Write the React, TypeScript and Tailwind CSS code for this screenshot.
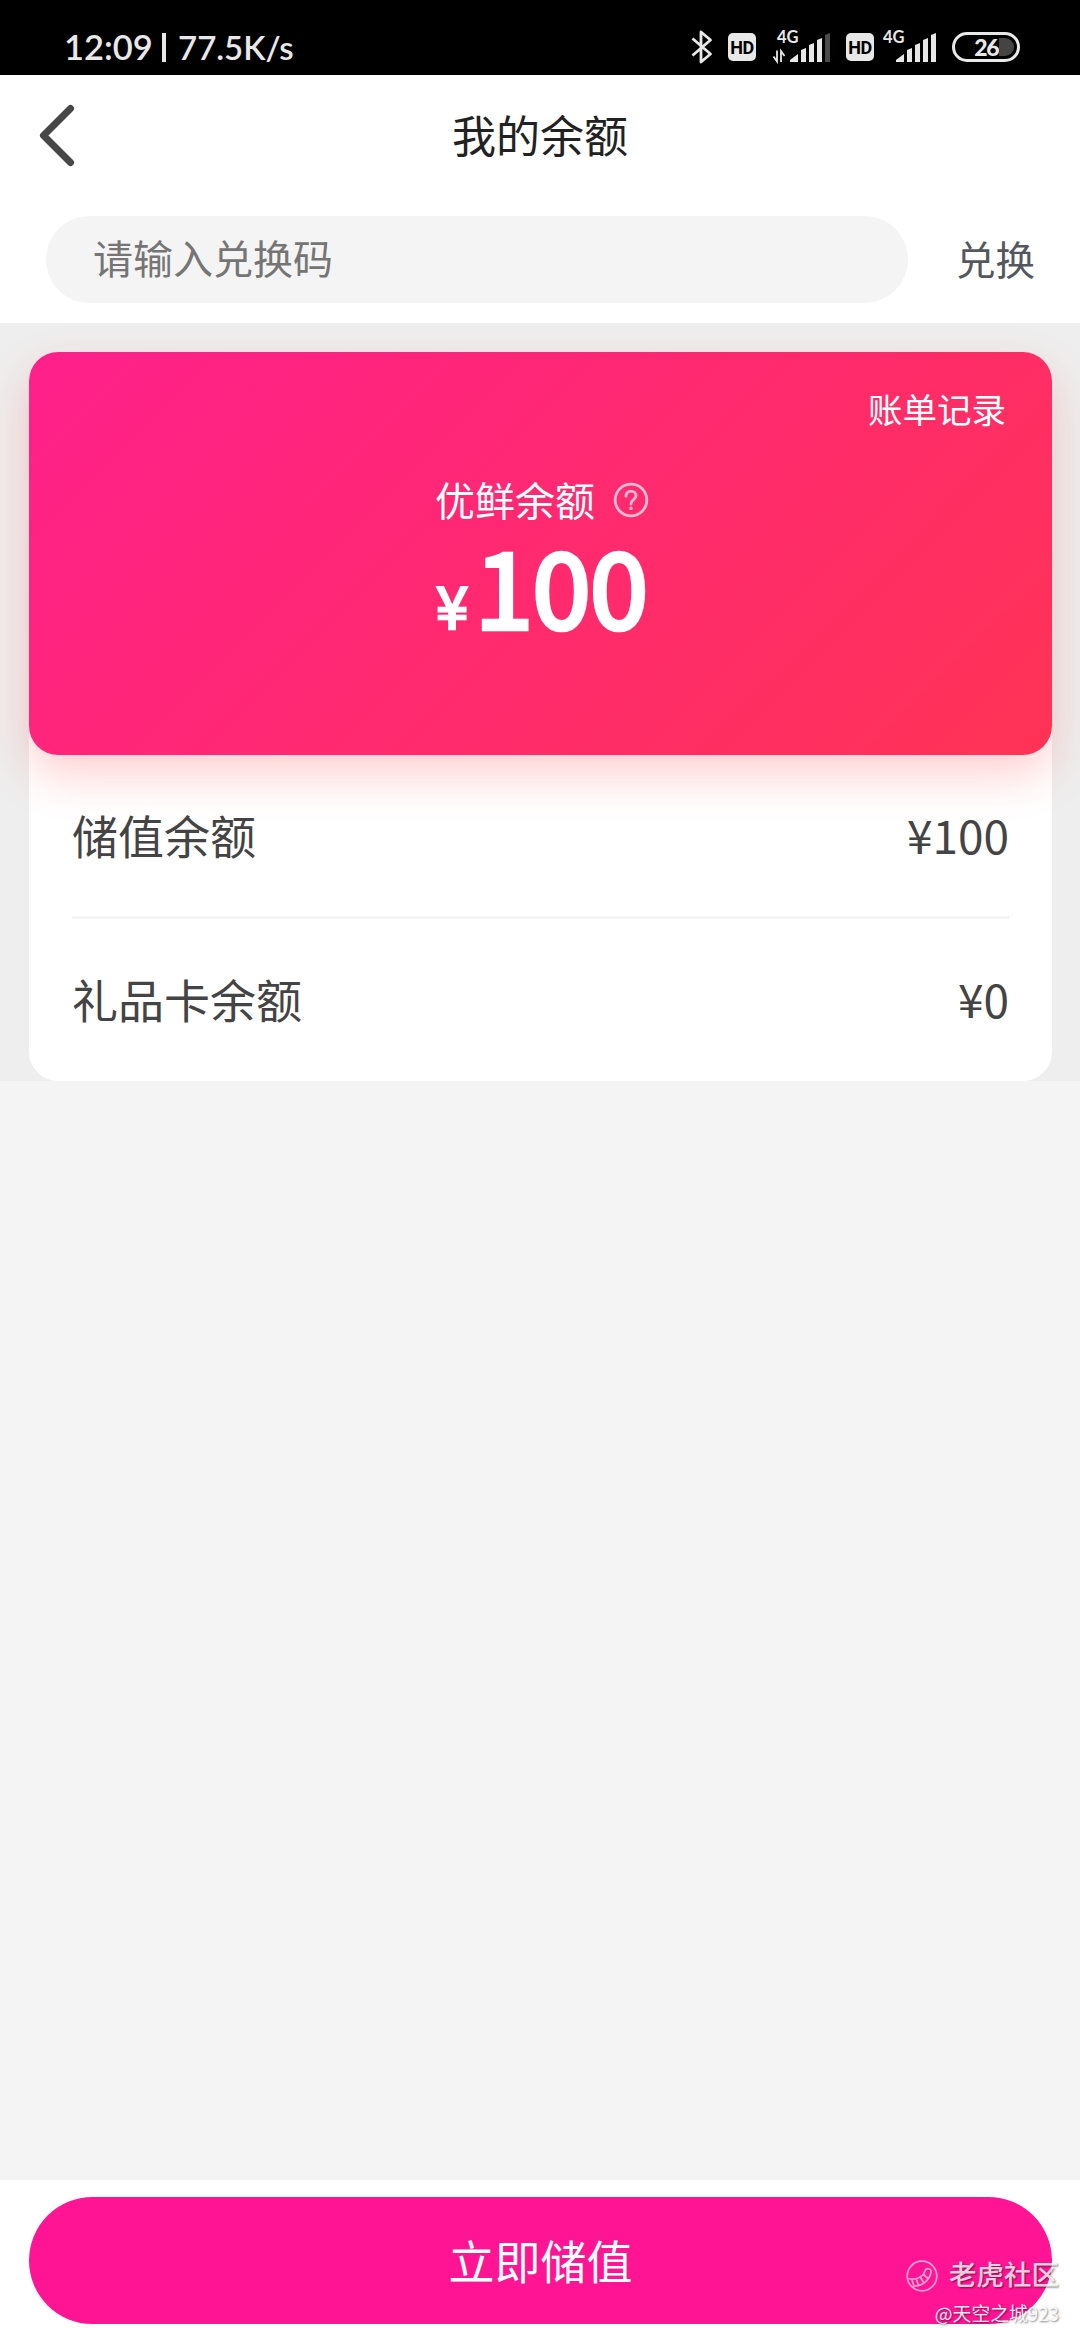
import type { ReactNode } from 'react';

interface SignalProps {
  level: number;
  transferring?: boolean;
}

interface BalanceRowProps {
  label: string;
  amount: number;
}

const BARS = [
  'M18 32V30L26 24V32Z',
  'M29 32V20L34 18V32Z',
  'M37 32V15L42 13V32Z',
  'M45 32V10L50 8V32Z',
  'M53 32V5L58 3V32Z',
];

function BluetoothIcon() {
  return (
    <svg width="22" height="36" viewBox="0 0 22 36" fill="none" stroke="#e8e8e8" strokeWidth="2.8" strokeLinejoin="round">
      <path d="M1.5 9.5L19.5 25L10 33V3L19.5 11L1.5 26.5" />
    </svg>
  );
}

function HdBadge() {
  return (
    <span className="flex h-7 w-7 items-center justify-center rounded-[5px] bg-[#e8e8e8] pt-px font-['Roboto'] text-[18px] leading-none font-bold tracking-[-0.5px] text-black">
      HD
    </span>
  );
}

function Signal({ level, transferring }: SignalProps) {
  return (
    <svg width="58" height="43" viewBox="0 -4 58 43" fill="#e8e8e8">
      <text x="5" y="13" fontFamily="Lato" fontSize="16.5" fontWeight="700">
        4G
      </text>
      {transferring && (
        <path d="M1.5 26.5L5 31.5V20.5M12.5 26L9 21V32" fill="none" stroke="#e8e8e8" strokeWidth="1.8" />
      )}
      {BARS.map((d, i) => (
        <path key={d} d={d} fill={i < level ? '#e8e8e8' : '#4a4a4a'} />
      ))}
    </svg>
  );
}

function Battery({ percent }: { percent: string }) {
  return (
    <span className="flex h-[30px] w-[68px] items-center justify-end rounded-full border-[3px] border-[#e8e8e8] pr-[3px]">
      <span className="font-['Lato'] text-[23px] leading-none font-black tracking-[-1.5px] text-[#e8e8e8]">
        {percent}
      </span>
      <span className="ml-px h-[18px] w-[15px] rounded-r-full bg-[#444]" />
    </span>
  );
}

function StatusBar() {
  return (
    <div className="flex h-[75px] bg-black pt-[29px] pr-[60px] pl-16 text-[#e8e8e8]">
      <div className="flex h-9 items-center font-['Lato'] leading-none font-semibold">
        <span className="w-[98px] text-[34.5px]">12:09</span>
        <span className="h-[29px] w-[3.5px] bg-[#e8e8e8]" />
        <span className="ml-[12.5px] text-[33px]">77.5K/s</span>
      </div>
      <div className="ml-auto flex h-9 items-center">
        <BluetoothIcon />
        <span className="w-[15px]" />
        <HdBadge />
        <span className="w-4" />
        <Signal level={4} transferring />
        <span className="w-4" />
        <HdBadge />
        <span className="w-1" />
        <Signal level={5} />
        <span className="w-4" />
        <Battery percent="26" />
      </div>
    </div>
  );
}

function Header() {
  return (
    <header className="relative flex h-[118px] items-center justify-center bg-white pb-px">
      <button className="absolute top-[29px] left-[39px]" aria-label="返回">
        <svg width="36" height="64" viewBox="0 0 36 64" fill="none" stroke="#474747" strokeWidth="7" strokeLinecap="round" strokeLinejoin="round">
          <path d="M31.5 4.5L4.5 31.5L31.5 58.5" />
        </svg>
      </button>
      <h1 className="text-[44px] leading-none text-[#222]">我的余额</h1>
    </header>
  );
}

function RedeemForm() {
  return (
    <div className="flex h-[130px] items-start bg-white pt-[23px] pl-[46px]">
      <div className="flex h-[87px] w-[862px] items-center rounded-full bg-[#f4f4f4] pb-[5px] pl-[47px] text-[40px] leading-none text-[#757575]">
        请输入兑换码
      </div>
      <button className="mt-[22px] ml-12 text-[39.5px] leading-none text-[#54585e]">兑换</button>
    </div>
  );
}

function HelpIcon() {
  return (
    <svg width="36" height="36" viewBox="0 0 36 36" fill="none" stroke="#ffbdd3" strokeWidth="2.8" strokeLinecap="round">
      <circle cx="18" cy="18" r="15.8" />
      <path d="M13 14.2C13 11 15.2 9.2 18 9.2S23 11.2 23 14C23 17.2 18 17.8 18 22" />
      <path d="M18 26.2V26.4" strokeWidth="3.4" />
    </svg>
  );
}

function BalanceCard() {
  return (
    <div className="relative flex h-[403px] flex-col rounded-[29px] bg-linear-[135deg,#ff208b_0%,#ff3355_100%] text-white shadow-[0_20px_46px_rgba(255,40,40,0.22)]">
      <a className="mt-[39px] mr-[46px] self-end text-[34.5px] leading-none">账单记录</a>
      <div className="mt-[53px] flex h-10 items-center pl-[406px] text-[40px] leading-none">
        <span>优鲜余额</span>
        <span className="mt-[3px] ml-[18px]">
          <HelpIcon />
        </span>
      </div>
      <div className="mt-[13px] flex items-baseline pl-[407px] leading-none">
        <span className="w-[39px] text-[58px] [-webkit-text-stroke:2.6px_white]">¥</span>
        <span className="text-[104.5px] tracking-[-0.5px] [-webkit-text-stroke:4.6px_white]">100</span>
      </div>
    </div>
  );
}

function BalanceRow({ label, amount }: BalanceRowProps) {
  return (
    <div className="flex h-[161px] items-center justify-between pb-1 text-[46px] leading-none text-[#444]">
      <span>{label}</span>
      <span>¥{amount}</span>
    </div>
  );
}

function Panel({ children }: { children: ReactNode }) {
  return <div className="h-[729px] rounded-[29px] bg-white">{children}</div>;
}

function Watermark() {
  return (
    <div className="absolute right-[21px] bottom-[17px] flex flex-col items-end text-white/80 [text-shadow:1px_1px_2px_rgba(0,0,0,0.5)]">
      <div className="flex items-center">
        <svg className="mr-[11px] mb-0.5" width="32" height="32" viewBox="0 0 32 32" fill="none" stroke="#ffa3d6" strokeWidth="1.7">
          <circle cx="16" cy="16" r="14.8" />
          <path d="M2.5 18.5C10 20.5 17 17 19 11C20 7.5 26 8 25 12.5C23.5 20 16 27 7 26" />
          <path d="M6 20L8 26M10.5 19.5L12.5 25.5M14.5 17.5L17.5 22.5M17.5 14.5L22 18.5" />
        </svg>
        <span className="pb-[7px] text-[27.5px] leading-none font-medium">老虎社区</span>
      </div>
      <span className="mt-[10px] text-[18.8px] leading-none text-white/90">@天空之城923</span>
    </div>
  );
}

export default function App() {
  return (
    <div className="flex h-[2340px] w-[1080px] flex-col overflow-hidden bg-[#f4f4f4] font-['Noto_Sans_CJK_SC',sans-serif]">
      <StatusBar />
      <Header />
      <RedeemForm />
      <section className="h-[758px] overflow-hidden bg-[#eee] pt-[29px] pr-[28px] pl-[29px]">
        <Panel>
          <BalanceCard />
          <div className="mx-[43px]">
            <BalanceRow label="储值余额" amount={100} />
            <div className="h-[3px] bg-[#f4f4f4]" />
            <BalanceRow label="礼品卡余额" amount={0} />
          </div>
        </Panel>
      </section>
      <footer className="relative mt-auto h-40 bg-white pt-[17px] pr-[28px] pl-[29px]">
        <button className="flex h-[127px] w-full items-center justify-center rounded-full bg-[#ff1493] pb-1 text-[46px] leading-none text-white">
          立即储值
        </button>
        <Watermark />
      </footer>
    </div>
  );
}
